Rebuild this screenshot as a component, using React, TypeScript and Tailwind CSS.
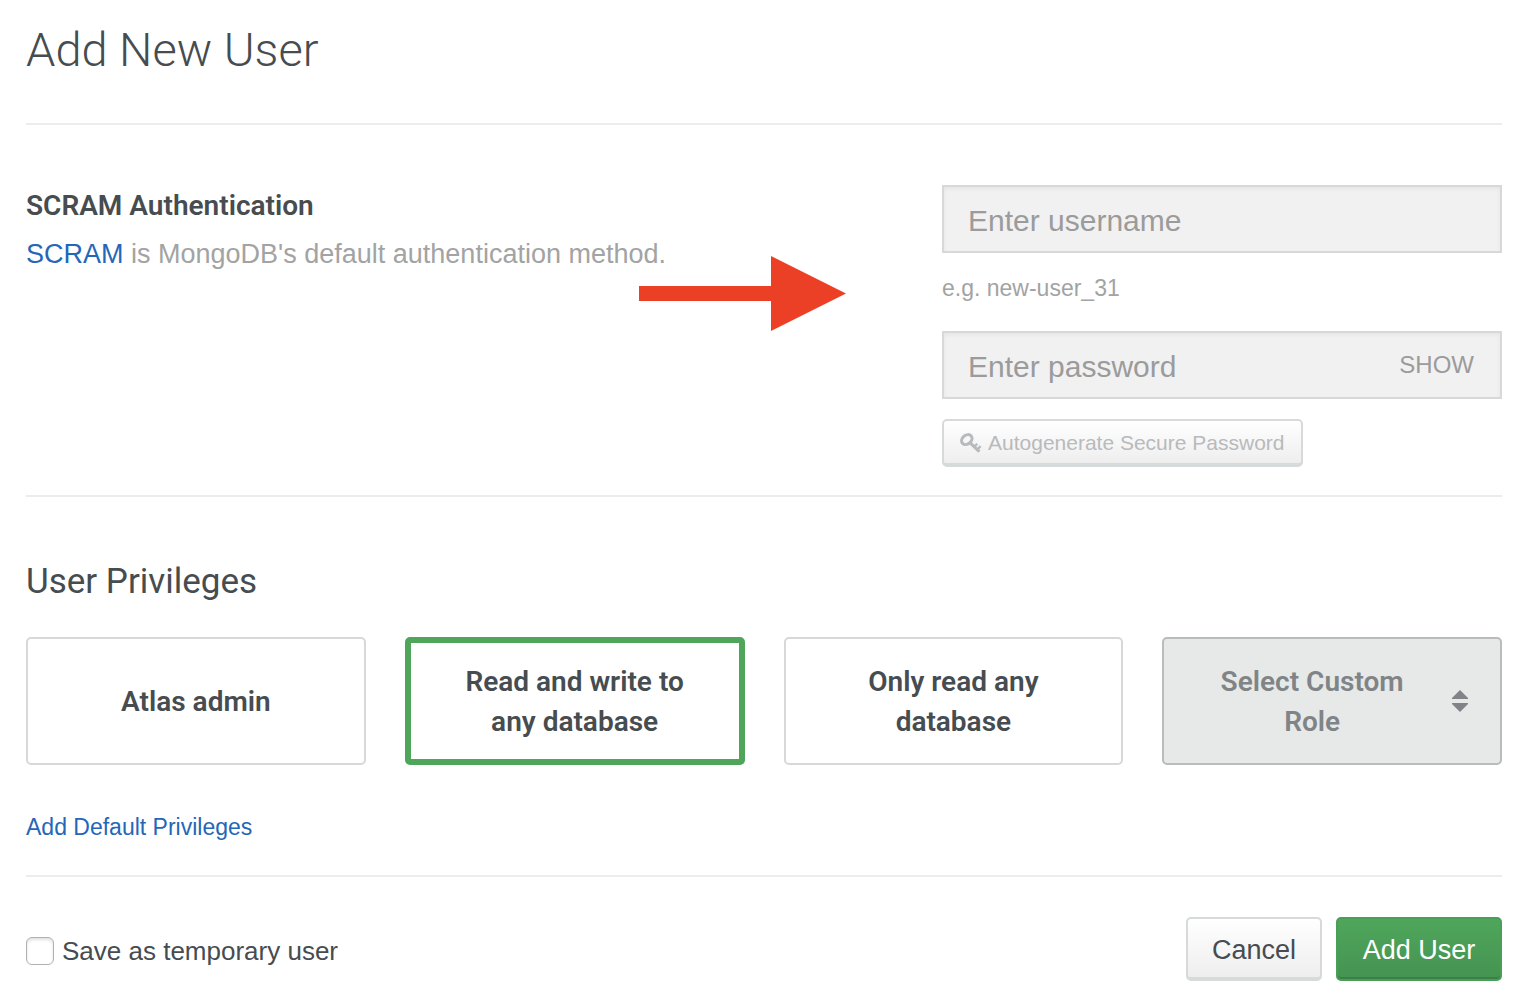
import { useState } from "react";

const roles = ["Atlas admin", "Read and write to any database", "Only read any database"];

function KeyIcon() {
  return (
    <svg viewBox="0 0 22 20" className="h-5 w-[22px] shrink-0" fill="none" stroke="currentColor" aria-hidden="true">
      <ellipse cx="6.8" cy="6.6" rx="5.7" ry="4.4" transform="rotate(-40 6.8 6.6)" strokeWidth="3" />
      <path d="M9.6 9.4 L19.4 18.6" strokeWidth="3.2" />
      <path d="M14.4 13.8 L17.2 10.8 M17.4 16.4 L20.6 13.2" strokeWidth="2.4" />
    </svg>
  );
}

function SortIcon() {
  return (
    <svg viewBox="0 0 16 22" className="h-[22px] w-4 shrink-0" fill="currentColor" aria-hidden="true">
      <path d="M8 0 L16 8 V9 H0 V8 Z" />
      <path d="M0 13 H16 V14 L8 22 L0 14 Z" />
    </svg>
  );
}

function Arrow() {
  return (
    <svg viewBox="0 0 207 75" className="absolute left-[613px] top-[131px] h-[75px] w-[207px]" fill="#eb4026" aria-hidden="true">
      <path d="M0 30 H132 V0 L207 37.5 L132 75 V45 H0 Z" />
    </svg>
  );
}

const field =
  "block h-[68px] w-full border-2 border-[#d7d8d8] bg-[#f1f1f1] pl-6 pt-1 text-[30px] text-[#494f51] shadow-[inset_0_2px_4px_rgba(0,0,0,0.05)] outline-none placeholder:text-[#9b9b9b] placeholder:opacity-100";

export default function App() {
  const [role, setRole] = useState(roles[1]);
  const [visible, setVisible] = useState(false);

  return (
    <form className="bg-white pl-[26px] pr-[25px] font-['Liberation_Sans',Arial,sans-serif] text-[#464c4f]" onSubmit={(e) => e.preventDefault()}>
      <h1 className="pb-[43px] pt-5 font-[Roboto,sans-serif] text-[47px] font-light leading-[60px]">Add New User</h1>

      <section className="relative flex justify-between border-y-2 border-[#ebecec] pb-7 pt-[60px]">
        <div className="pt-px">
          <h2 className="font-[Roboto,sans-serif] text-[28px] font-semibold leading-[40px]">SCRAM Authentication</h2>
          <p className="mt-2 text-[27px] leading-[40px] text-[#a2a3a3]">
            <a href="#scram" className="text-[#2467b8]">SCRAM</a> is MongoDB's default authentication method.
          </p>
        </div>
        <Arrow />
        <div className="w-[560px]">
          <input type="text" aria-label="Username" aria-describedby="username-hint" placeholder="Enter username" className={`${field} pr-6`} />
          <p id="username-hint" className="mb-7 mt-5 text-[23px] leading-[30px] text-[#a2a3a3]">e.g. new-user_31</p>
          <div className="relative">
            <input type={visible ? "text" : "password"} aria-label="Password" placeholder="Enter password" className={`${field} pr-32`} />
            <button type="button" onClick={() => setVisible(!visible)} className="absolute right-7 top-4 text-[24px] leading-[36px] text-[#9b9b9b]">
              SHOW
            </button>
          </div>
          <button type="button" className="mt-5 flex h-12 items-center gap-1.5 rounded-[5px] border-2 border-b-4 border-[#d6dada] bg-linear-to-b from-white to-[#eeeeee] px-4 pt-0.5 text-[21px] text-[#b8babb]">
            <KeyIcon />
            Autogenerate Secure Password
          </button>
        </div>
      </section>

      <section className="border-b-2 border-[#ebecec] pb-7 pt-[61px]">
        <h2 className="font-[Roboto,sans-serif] text-[35px] leading-[48px]">User Privileges</h2>
        <div className="mt-[31px] grid grid-cols-4 gap-[39px] text-center font-[Roboto,sans-serif] text-[28px] font-semibold leading-[40px]">
          {roles.map((name) => (
            <label key={name} className="flex h-32 cursor-pointer items-center justify-center rounded-[5px] border-2 border-[#d7d8d8] px-10 pt-0.5 has-checked:border-[6px] has-checked:border-[#4fa65b] has-checked:px-9">
              <input type="radio" name="role" className="sr-only" checked={role === name} onChange={() => setRole(name)} />
              <span className="max-w-[240px]">{name}</span>
            </label>
          ))}
          <label className="relative flex h-32 items-center rounded-[5px] border-2 border-[#b9bcbc] bg-[#e7e9e8] pl-8 pr-8 text-[#808487]">
            <span className="flex-1 pr-6 pt-0.5">Select Custom Role</span>
            <SortIcon />
            <select aria-label="Select Custom Role" className="absolute inset-0 size-full opacity-0">
              <option></option>
            </select>
          </label>
        </div>
        <a href="#defaults" className="mt-[42px] block w-fit text-[23px] leading-[40px] text-[#2467b8]">Add Default Privileges</a>
      </section>

      <div className="flex items-center justify-between pb-5 pt-10">
        <label className="flex items-center gap-2 pt-1 text-[26px] leading-[40px]">
          <input type="checkbox" className="size-7 appearance-none rounded-[6px] border border-[#b0b0b0] bg-white shadow-[inset_0_2px_3px_rgba(0,0,0,0.12)] checked:bg-[#4fa65b]" />
          Save as temporary user
        </label>
        <div className="flex gap-3.5 text-[27px]">
          <button type="button" className="h-16 rounded-[5px] border-2 border-b-4 border-[#d6dada] bg-linear-to-b from-white to-[#eeeeee] px-6 pt-1">Cancel</button>
          <button type="submit" className="h-16 min-w-[166px] rounded-[5px] border-2 border-[#4a9f57] bg-linear-to-b from-[#4fa65b] to-[#459352] px-6 pt-0.5 text-white shadow-[inset_0_-2px_0_#3d7f49]">Add User</button>
        </div>
      </div>
    </form>
  );
}
